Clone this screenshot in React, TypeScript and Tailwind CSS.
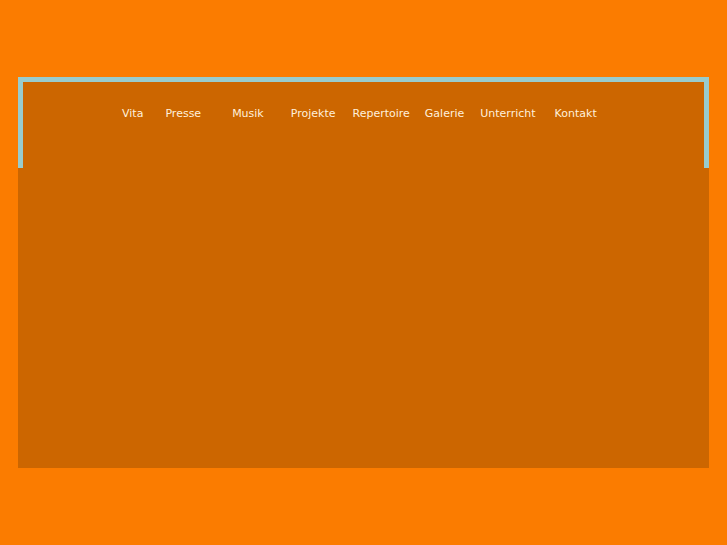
const NAV = [
  { label: "Vita", ml: "ml-0" },
  { label: "Presse", ml: "ml-[22px]" },
  { label: "Musik", ml: "ml-[31px]" },
  { label: "Projekte", ml: "ml-[27px]" },
  { label: "Repertoire", ml: "ml-[17px]" },
  { label: "Galerie", ml: "ml-[15px]" },
  { label: "Unterricht", ml: "ml-[16px]" },
  { label: "Kontakt", ml: "ml-[19px]" },
];

export default function App() {
  return (
    <div className="min-h-[545px] w-full bg-[#fb7c00] pt-[77px] pl-[18px]">
      <div className="w-[691px] h-[391px] bg-[#cc6600]">
        <div className="h-[91px] border-t-[5px] border-x-[5px] border-[#99cccc] pt-[25px] pl-[99px]">
          <nav className="flex font-['DejaVu_Sans',Verdana,sans-serif] text-[11px] leading-[14px] text-[#fff0dc]">
            {NAV.map((n) => (
              <a key={n.label} href="#" className={n.ml}>
                {n.label}
              </a>
            ))}
          </nav>
        </div>
      </div>
    </div>
  );
}
